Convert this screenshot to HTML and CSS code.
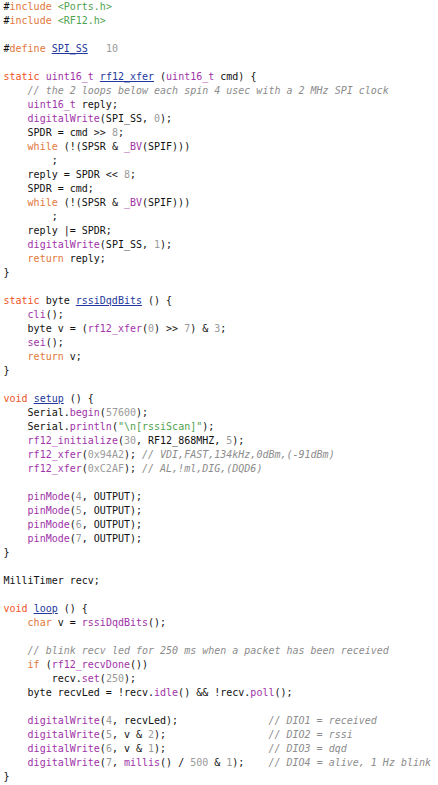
FILE: index.html
```html
<!DOCTYPE html>
<html>
<head>
<meta charset="utf-8">
<link rel="stylesheet" href="styles.css">
</head>
<body>
<div class="code">
<div class="ln">#<span class="kw">include</span> <span class="str">&lt;Ports.h&gt;</span></div>
<div class="ln">#<span class="kw">include</span> <span class="str">&lt;RF12.h&gt;</span></div>
<div class="ln"></div>
<div class="ln">#<span class="kw">define</span> <span class="def">SPI_SS</span>   <span class="num">10</span></div>
<div class="ln"></div>
<div class="ln"><span class="st">static</span> <span class="fn">uint16_t</span> <span class="def">rf12_xfer</span> (<span class="fn">uint16_t</span> cmd) {</div>
<div class="ln">    <span class="cm">// the 2 loops below each spin 4 usec with a 2 MHz SPI clock</span></div>
<div class="ln">    <span class="fn">uint16_t</span> reply;</div>
<div class="ln">    <span class="fn">digitalWrite</span>(SPI_SS, <span class="num">0</span>);</div>
<div class="ln">    SPDR = cmd &gt;&gt; <span class="num">8</span>;</div>
<div class="ln">    <span class="kw">while</span> (!(SPSR &amp; <span class="fn">_BV</span>(SPIF)))</div>
<div class="ln">        ;</div>
<div class="ln">    reply = SPDR &lt;&lt; <span class="num">8</span>;</div>
<div class="ln">    SPDR = cmd;</div>
<div class="ln">    <span class="kw">while</span> (!(SPSR &amp; <span class="fn">_BV</span>(SPIF)))</div>
<div class="ln">        ;</div>
<div class="ln">    reply |= SPDR;</div>
<div class="ln">    <span class="fn">digitalWrite</span>(SPI_SS, <span class="num">1</span>);</div>
<div class="ln">    <span class="kw">return</span> reply;</div>
<div class="ln">}</div>
<div class="ln"></div>
<div class="ln"><span class="st">static</span> byte <span class="def">rssiDqdBits</span> () {</div>
<div class="ln">    <span class="fn">cli</span>();</div>
<div class="ln">    byte v = (<span class="fn">rf12_xfer</span>(<span class="num">0</span>) &gt;&gt; <span class="num">7</span>) &amp; <span class="num">3</span>;</div>
<div class="ln">    <span class="fn">sei</span>();</div>
<div class="ln">    <span class="kw">return</span> v;</div>
<div class="ln">}</div>
<div class="ln"></div>
<div class="ln"><span class="st">void</span> <span class="def">setup</span> () {</div>
<div class="ln">    Serial.<span class="fn">begin</span>(<span class="num">57600</span>);</div>
<div class="ln">    Serial.<span class="fn">println</span>(<span class="str">"\n[rssiScan]"</span>);</div>
<div class="ln">    <span class="fn">rf12_initialize</span>(<span class="num">30</span>, RF12_868MHZ, <span class="num">5</span>);</div>
<div class="ln">    <span class="fn">rf12_xfer</span>(<span class="num">0x94A2</span>); <span class="cm">// VDI,FAST,134kHz,0dBm,(-91dBm)</span></div>
<div class="ln">    <span class="fn">rf12_xfer</span>(<span class="num">0xC2AF</span>); <span class="cm">// AL,!ml,DIG,(DQD6)</span></div>
<div class="ln"></div>
<div class="ln">    <span class="fn">pinMode</span>(<span class="num">4</span>, OUTPUT);</div>
<div class="ln">    <span class="fn">pinMode</span>(<span class="num">5</span>, OUTPUT);</div>
<div class="ln">    <span class="fn">pinMode</span>(<span class="num">6</span>, OUTPUT);</div>
<div class="ln">    <span class="fn">pinMode</span>(<span class="num">7</span>, OUTPUT);</div>
<div class="ln">}</div>
<div class="ln"></div>
<div class="ln">MilliTimer recv;</div>
<div class="ln"></div>
<div class="ln"><span class="st">void</span> <span class="def">loop</span> () {</div>
<div class="ln">    <span class="kw">char</span> v = <span class="fn">rssiDqdBits</span>();</div>
<div class="ln"></div>
<div class="ln">    <span class="cm">// blink recv led for 250 ms when a packet has been received</span></div>
<div class="ln">    <span class="kw">if</span> (<span class="fn">rf12_recvDone</span>())</div>
<div class="ln">        recv.<span class="fn">set</span>(<span class="num">250</span>);</div>
<div class="ln">    byte recvLed = !recv.<span class="fn">idle</span>() &amp;&amp; !recv.<span class="fn">poll</span>();</div>
<div class="ln"></div>
<div class="ln">    <span class="fn">digitalWrite</span>(<span class="num">4</span>, recvLed);               <span class="cm">// DIO1 = received</span></div>
<div class="ln">    <span class="fn">digitalWrite</span>(<span class="num">5</span>, v &amp; <span class="num">2</span>);                 <span class="cm">// DIO2 = rssi</span></div>
<div class="ln">    <span class="fn">digitalWrite</span>(<span class="num">6</span>, v &amp; <span class="num">1</span>);                 <span class="cm">// DIO3 = dqd</span></div>
<div class="ln">    <span class="fn">digitalWrite</span>(<span class="num">7</span>, <span class="fn">millis</span>() / <span class="num">500</span> &amp; <span class="num">1</span>);    <span class="cm">// DIO4 = alive, 1 Hz blink</span></div>
<div class="ln">}</div>
</div>
</body>
</html>
```
FILE: styles.css
```css
html, body {
  margin: 0;
  padding: 0;
  background: #ffffff;
}

.code {
  display: flex;
  flex-direction: column;
  padding: 0 0 0 3.5px;
  font-family: "DejaVu Sans Mono", monospace;
  font-size: 10px;
  line-height: 14px;
  color: #111111;
}

.ln {
  white-space: pre;
  height: 14px;
}

.kw { color: #e2773a; }
.st { color: #f0521e; }
.fn { color: #a033a8; }
.str { color: #4fa24f; }
.num { color: #9a9a9a; }
.cm { color: #8c8c8c; font-style: italic; }
.def {
  color: #23389c;
  text-decoration: underline;
  text-decoration-color: #23389c;
}
```
